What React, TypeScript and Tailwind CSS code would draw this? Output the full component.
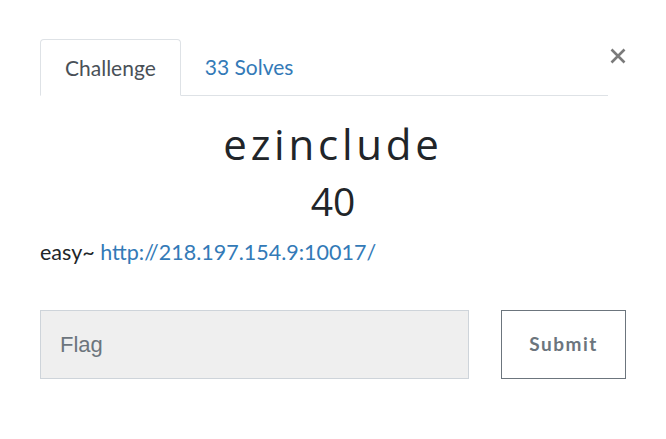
export default function App() {
  return (
    <div className="w-[666px] h-[439px] bg-white font-['Lato',sans-serif] text-[#212529]">
      <div className="flex flex-col px-10 pt-[39px]">
        <div className="flex items-start">
          <div className="flex flex-1 border-b border-[#dee2e6] h-[57px]">
            <div className="h-[57px] px-6 flex items-center border border-[#dee2e6] border-b-white rounded-t-[4px] bg-white text-[21px] text-[#495057]">
              Challenge
            </div>
            <div className="h-[56px] px-6 flex items-center text-[21px] text-[#337ab7]">33 Solves</div>
          </div>
          <button className="w-[18px] mt-[9px] pl-[2px] flex" aria-label="Close">
            <svg width="16" height="16" viewBox="0 0 16 16">
              <path d="M1.5 1.5 L14.5 14.5 M14.5 1.5 L1.5 14.5" stroke="#7a7a7a" strokeWidth="2.6" />
            </svg>
          </button>
        </div>

        <div className="flex flex-col items-center mt-[23px]">
          <h2 className="text-[42px] leading-[50px] tracking-[0.09em] font-['Open_Sans',sans-serif] text-[#212529]">
            ezinclude
          </h2>
          <div className="text-[39px] leading-[48px] mt-[8px] font-['Open_Sans',sans-serif]">40</div>
        </div>

        <p className="mt-[12px] text-[21.5px] leading-[30px]">
          easy~ <a className="text-[#337ab7]">http://218.197.154.9:10017/</a>
        </p>

        <div className="flex mt-[43px] gap-8">
          <input
            placeholder="Flag"
            className="w-[430px] h-[69px] bg-[#efefef] border border-[#ced4da] px-[19px] text-[22px] font-['Liberation_Sans',sans-serif] placeholder:text-[#6c757d] outline-none"
          />
          <button className="w-[125px] h-[69px] border border-[#6c757d] text-[#6c757d] font-bold text-[19px] tracking-[0.08em]">
            Submit
          </button>
        </div>
      </div>
    </div>
  );
}
